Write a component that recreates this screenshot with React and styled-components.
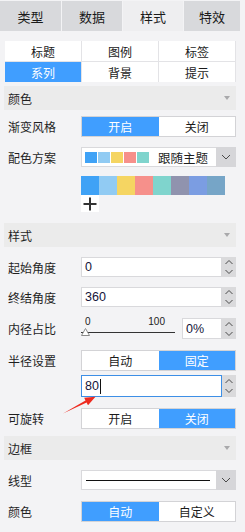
import React from "react";
import styled, { createGlobalStyle } from "styled-components";

const GlobalStyle = createGlobalStyle`
  html, body { margin: 0; padding: 0; background: #f3f3f5; }
  body {
    font-family: "Liberation Sans", "Noto Sans CJK SC", sans-serif;
    font-size: 12px;
    color: #1f1f1f;
  }
`;

const Page = styled.div`
  position: relative;
  width: 245px;
  height: 532px;
  overflow: hidden;
  padding-top: 1px;
  box-sizing: border-box;
`;

const TabBar = styled.div`
  display: grid;
  grid-template-columns: 61px 60px 60px 56px;
  gap: 1px;
  height: 30px;
`;

const Tab = styled.div`
  display: flex;
  align-items: center;
  justify-content: center;
  font-size: 13px;
  color: #1a1a1a;
  background: ${(p) => (p.$active ? "#eeeef0" : "#d8d9dc")};
`;

const SubGrid = styled.div`
  margin: 10px 0 0 5px;
  width: 231px;
  box-sizing: border-box;
  padding-right: 1px;
  display: grid;
  grid-template-columns: repeat(3, 76px);
  grid-auto-rows: 20px;
  gap: 1px;
  background: #e3e3e6;
`;

const SubTab = styled.div`
  display: flex;
  align-items: center;
  justify-content: center;
  background: ${(p) => (p.$active ? "#409eff" : "#ffffff")};
  color: ${(p) => (p.$active ? "#ffffff" : "#1a1a1a")};
`;

const SectionHeader = styled.div`
  margin: ${(p) => p.$mt}px 0 0 4px;
  width: 232px;
  height: 24px;
  box-sizing: border-box;
  padding: 0 6px 0 4px;
  display: flex;
  align-items: center;
  justify-content: space-between;
  background: #ebebeb;
`;

const Caret = styled.span`
  width: 0;
  height: 0;
  border-left: 3.5px solid transparent;
  border-right: 3.5px solid transparent;
  border-top: 4px solid #a9a9ab;
`;

const Row = styled.div`
  display: flex;
  align-items: center;
  margin-top: ${(p) => p.$mt}px;
  height: ${(p) => p.$h}px;
`;

const Label = styled.div`
  width: 81px;
  box-sizing: border-box;
  padding-left: 8px;
  flex: none;
`;

const Toggle = styled.div`
  width: 155px;
  height: 100%;
  box-sizing: border-box;
  border: 1px solid #d3d3d6;
  display: grid;
  grid-template-columns: 1fr 1fr;
  background: #fff;
`;

const ToggleHalf = styled.div`
  display: flex;
  align-items: center;
  justify-content: center;
  background: ${(p) => (p.$on ? "#409eff" : "#ffffff")};
  color: ${(p) => (p.$on ? "#ffffff" : "#1a1a1a")};
`;

const Select = styled.div`
  width: 155px;
  height: 100%;
  display: flex;
`;

const SelectBody = styled.div`
  flex: 1;
  box-sizing: border-box;
  border: 1px solid #d9d9dc;
  border-right: none;
  background: #fff;
  display: flex;
  align-items: center;
  padding-left: 3px;
`;

const SelectArrow = styled.div`
  width: 20px;
  flex: none;
  background: #d6d6d9;
  display: flex;
  align-items: center;
  justify-content: center;
`;

const Swatches = styled.div`
  display: grid;
  grid-template-columns: repeat(5, 12px);
  grid-auto-rows: 11px;
  gap: 1px;
  flex: none;
`;

const Swatch = styled.span`
  background: ${(p) => p.$c};
`;

const SelectText = styled.span`
  margin-left: auto;
  margin-right: 8px;
  font-size: 12.5px;
  white-space: nowrap;
`;

const LineSample = styled.span`
  width: 124px;
  height: 1px;
  background: #111;
  margin-left: 1px;
`;

const ColorBar = styled.div`
  margin: 9px 0 0 81px;
  display: flex;
  height: 19px;
`;

const ColorCell = styled.span`
  width: 18px;
  height: 100%;
  background: ${(p) => p.$c};
`;

const AddButton = styled.div`
  margin-left: 81px;
  width: 18px;
  height: 17px;
  background: #fff;
  display: flex;
  align-items: center;
  justify-content: center;
`;

const NumberField = styled.div`
  width: ${(p) => p.$w}px;
  height: 100%;
  display: flex;
  flex: none;
`;

const NumberInput = styled.div`
  flex: 1;
  box-sizing: border-box;
  border: 1px solid ${(p) => (p.$focus ? "#3d8fe6" : "#d9d9dc")};
  background: #fff;
  display: flex;
  align-items: center;
  padding-left: 3px;
  color: #15153a;
  font-size: 12.5px;
`;

const TextCaret = styled.span`
  width: 1px;
  height: 15px;
  background: #111;
  margin-left: 1px;
`;

const Spinner = styled.div`
  width: 14px;
  flex: none;
  background: #dadadc;
  display: flex;
  align-items: center;
  justify-content: center;
`;

const SliderWrap = styled.div`
  display: flex;
  align-items: center;
  gap: 7px;
  height: 100%;
`;

const Slider = styled.div`
  width: 94px;
  height: 100%;
  display: flex;
  flex-direction: column;
`;

const Ticks = styled.div`
  display: flex;
  justify-content: space-between;
  padding: 0 10px 0 4px;
  font-size: 10px;
  line-height: 10px;
  margin-top: -1px;
  color: #222;
`;

const Track = styled.div`
  position: relative;
  margin-top: 5px;
  height: 1px;
  background: #333;
`;

const Thumb = styled.svg`
  position: absolute;
  left: 0;
  top: -4px;
`;

const Arrow = styled.svg`
  position: absolute;
  left: 60px;
  top: 394px;
`;

const SpinIcon = () => (
  <svg width="14" height="20" viewBox="0 0 14 20">
    <polyline points="3.5,7 7,3.5 10.5,7" fill="none" stroke="#4a4a4a" strokeWidth="1" />
    <polyline points="3.5,13 7,16.5 10.5,13" fill="none" stroke="#4a4a4a" strokeWidth="1" />
  </svg>
);

const ChevronDown = () => (
  <svg width="10" height="6" viewBox="0 0 10 6">
    <polyline points="1,1 5,5 9,1" fill="none" stroke="#4a4a4a" strokeWidth="1" />
  </svg>
);

const palette = ["#3fa2f6", "#91cbf3", "#f5d562", "#f6908b", "#7fd4cd", "#9093ae", "#7b9de2", "#76a5c7"];

export default function App() {
  return (
    <Page>
      <GlobalStyle />
      <TabBar>
        <Tab>类型</Tab>
        <Tab>数据</Tab>
        <Tab $active>样式</Tab>
        <Tab>特效</Tab>
      </TabBar>

      <SubGrid>
        <SubTab>标题</SubTab>
        <SubTab>图例</SubTab>
        <SubTab>标签</SubTab>
        <SubTab $active>系列</SubTab>
        <SubTab>背景</SubTab>
        <SubTab>提示</SubTab>
      </SubGrid>

      <SectionHeader $mt={4}>
        <span>颜色</span>
        <Caret />
      </SectionHeader>

      <Row $mt={6} $h={21}>
        <Label>渐变风格</Label>
        <Toggle>
          <ToggleHalf $on>开启</ToggleHalf>
          <ToggleHalf>关闭</ToggleHalf>
        </Toggle>
      </Row>

      <Row $mt={10} $h={20}>
        <Label>配色方案</Label>
        <Select>
          <SelectBody>
            <Swatches>
              {palette.slice(0, 5).map((c) => (
                <Swatch key={c} $c={c} />
              ))}
            </Swatches>
            <SelectText>跟随主题</SelectText>
          </SelectBody>
          <SelectArrow>
            <ChevronDown />
          </SelectArrow>
        </Select>
      </Row>

      <ColorBar>
        {palette.map((c) => (
          <ColorCell key={c} $c={c} />
        ))}
      </ColorBar>
      <AddButton>
        <svg width="14" height="14" viewBox="0 0 14 14">
          <rect x="0.5" y="6" width="13" height="2" fill="#333" />
          <rect x="6" y="0.5" width="2" height="13" fill="#333" />
        </svg>
      </AddButton>

      <SectionHeader $mt={11}>
        <span>样式</span>
        <Caret />
      </SectionHeader>

      <Row $mt={10} $h={20}>
        <Label>起始角度</Label>
        <NumberField $w={155}>
          <NumberInput>0</NumberInput>
          <Spinner>
            <SpinIcon />
          </Spinner>
        </NumberField>
      </Row>

      <Row $mt={10} $h={20}>
        <Label>终结角度</Label>
        <NumberField $w={155}>
          <NumberInput>360</NumberInput>
          <Spinner>
            <SpinIcon />
          </Spinner>
        </NumberField>
      </Row>

      <Row $mt={11} $h={21}>
        <Label>内径占比</Label>
        <SliderWrap>
          <Slider>
            <Ticks>
              <span>0</span>
              <span>100</span>
            </Ticks>
            <Track>
              <Thumb width="9" height="8" viewBox="0 0 9 8">
                <polygon points="4.5,0.5 8.5,7.5 0.5,7.5" fill="#fff" stroke="#8a8a8a" strokeWidth="1" />
              </Thumb>
            </Track>
          </Slider>
          <NumberField $w={54}>
            <NumberInput>0%</NumberInput>
            <Spinner>
              <SpinIcon />
            </Spinner>
          </NumberField>
        </SliderWrap>
      </Row>

      <Row $mt={11} $h={21}>
        <Label>半径设置</Label>
        <Toggle>
          <ToggleHalf>自动</ToggleHalf>
          <ToggleHalf $on>固定</ToggleHalf>
        </Toggle>
      </Row>

      <Row $mt={4} $h={22}>
        <Label />
        <NumberField $w={155}>
          <NumberInput $focus>
            80
            <TextCaret />
          </NumberInput>
          <Spinner>
            <SpinIcon />
          </Spinner>
        </NumberField>
      </Row>

      <Row $mt={11} $h={21}>
        <Label>可旋转</Label>
        <Toggle>
          <ToggleHalf>开启</ToggleHalf>
          <ToggleHalf $on>关闭</ToggleHalf>
        </Toggle>
      </Row>

      <SectionHeader $mt={7}>
        <span>边框</span>
        <Caret />
      </SectionHeader>

      <Row $mt={10} $h={20}>
        <Label>线型</Label>
        <Select>
          <SelectBody>
            <LineSample />
          </SelectBody>
          <SelectArrow>
            <ChevronDown />
          </SelectArrow>
        </Select>
      </Row>

      <Row $mt={11} $h={21}>
        <Label>颜色</Label>
        <Toggle>
          <ToggleHalf $on>自动</ToggleHalf>
          <ToggleHalf>自定义</ToggleHalf>
        </Toggle>
      </Row>

      <Arrow width="40" height="24" viewBox="0 0 40 24">
        <polygon
          points="3,19.5 25.5,6.6 24.2,3.7 35.5,2.8 28,11.2 26.6,8.6"
          fill="#ee2a1f"
        />
      </Arrow>
    </Page>
  );
}
